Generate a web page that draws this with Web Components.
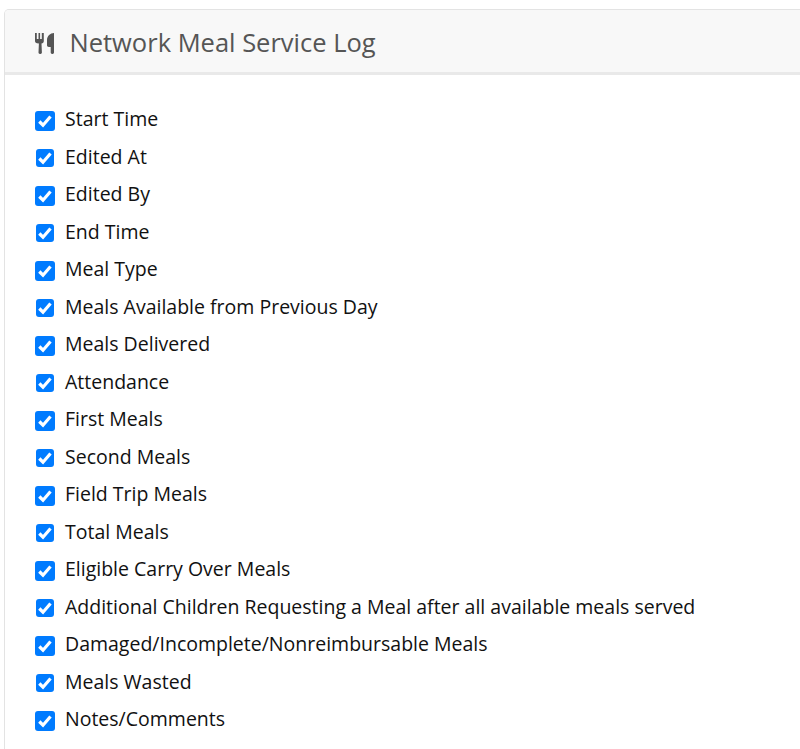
<!DOCTYPE html>
<html>
<head>
<meta charset="utf-8">
<title>Network Meal Service Log</title>
<style>
  html, body { margin: 0; height: 749px; overflow: hidden; background: #fff; }
  body { font-family: "Open Sans", sans-serif; padding: 9px 0 0 4px; box-sizing: border-box; }
</style>
</head>
<body>
<log-card heading="Network Meal Service Log">
  <check-row>Start Time</check-row>
  <check-row>Edited At</check-row>
  <check-row>Edited By</check-row>
  <check-row>End Time</check-row>
  <check-row>Meal Type</check-row>
  <check-row>Meals Available from Previous Day</check-row>
  <check-row>Meals Delivered</check-row>
  <check-row>Attendance</check-row>
  <check-row>First Meals</check-row>
  <check-row>Second Meals</check-row>
  <check-row>Field Trip Meals</check-row>
  <check-row>Total Meals</check-row>
  <check-row>Eligible Carry Over Meals</check-row>
  <check-row>Additional Children Requesting a Meal after all available meals served</check-row>
  <check-row>Damaged/Incomplete/Nonreimbursable Meals</check-row>
  <check-row>Meals Wasted</check-row>
  <check-row>Notes/Comments</check-row>
</log-card>

<script>
class LogCard extends HTMLElement {
  constructor() {
    super();
    this.attachShadow({ mode: 'open' });
    this.shadowRoot.innerHTML = `
      <style>
        :host {
          display: block;
          width: 830px;
          height: 740px;
          box-sizing: border-box;
          background: #fff;
          border: 1px solid #e3e3e3;
          border-bottom: 0;
          border-radius: 5px 5px 0 0;
        }
        header {
          display: flex;
          align-items: center;
          gap: 14.500px;
          height: 62px;
          padding-left: 30px;
          background: #f8f8f8;
          border-bottom: 3px solid #e9e9e9;
          border-radius: 4px 4px 0 0;
          color: #555;
        }
        svg { width: 20px; height: 24px; margin-top: 4px; fill: #555; flex: none; }
        h2 { margin: 3px 0 0; font-size: 25.500px; font-weight: 400; line-height: 1.2; }
        .body { padding: 25px 30px 0; }
      </style>
      <header>
        <svg viewBox="0 0 20 24" aria-hidden="true">
          <path d="M0 2h1.800v6h1.700V2h1.600v6h1.700V2H8.800v8c0 1.300-.9 2.300-2.300 2.600l.4 9c0 .8-.6 1.400-1.400 1.400h-.6c-.8 0-1.400-.6-1.400-1.400l.4-9C.9 12.300 0 11.300 0 10z"/>
          <path d="M19 2v19.600c0 .8-.6 1.400-1.400 1.400h-.5c-.8 0-1.400-.6-1.400-1.400V16h-1.900c-1 0-1.800-.7-1.800-1.700V9c0-4 3.300-7 7-7z"/>
        </svg>
        <h2>${this.getAttribute('heading')}</h2>
      </header>
      <div class="body"><slot></slot></div>
    `;
  }
}

class CheckRow extends HTMLElement {
  constructor() {
    super();
    this.attachShadow({ mode: 'open' });
    this.shadowRoot.innerHTML = `
      <style>
        :host {
          display: flex;
          align-items: center;
          gap: 10px;
          height: 37.5px;
          font-size: 19.5px;
          color: #111;
        }
        .box {
          flex: none;
          display: flex;
          align-items: center;
          justify-content: center;
          width: 20px;
          height: 20px;
          margin-top: 4px;
          border-radius: 3px;
          background: #007bff;
        }
        /* the even rows land on a half pixel in the original and come out smaller */
        :host(:nth-child(even)) .box {
          width: 18px;
          height: 18px;
          margin: 4px 1px 0;
        }
        .box svg { display: block; flex: none; width: 20px; height: 20px; }
        .box path { fill: none; stroke: #fff; stroke-width: 3.200; }
      </style>
      <span class="box">
        <svg viewBox="0 0 20 20" aria-hidden="true"><path d="M4.300 10.500l3.700 3.700 7.500-8.700"/></svg>
      </span>
      <span><slot></slot></span>
    `;
  }
}

customElements.define('log-card', LogCard);
customElements.define('check-row', CheckRow);
</script>
</body>
</html>
